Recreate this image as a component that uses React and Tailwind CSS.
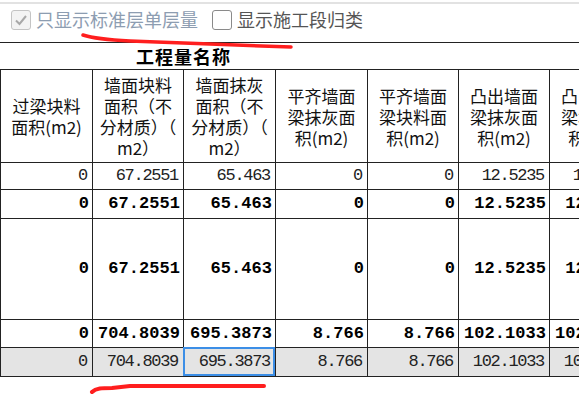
import React from "react";

const headers = [
  ["过梁块料", "面积(m2)"],
  ["墙面块料", "面积（不", "分材质）（", "m2）"],
  ["墙面抹灰", "面积（不", "分材质）（", "m2）"],
  ["平齐墙面", "梁抹灰面", "积(m2)"],
  ["平齐墙面", "梁块料面", "积(m2)"],
  ["凸出墙面", "梁抹灰面", "积(m2)"],
  ["凸出墙面", "梁块料面", "积(m2)"],
];

const v1 = ["0", "67.2551", "65.463", "0", "0", "12.5235", "12.5235"];
const v2 = ["0", "704.8039", "695.3873", "8.766", "8.766", "102.1033", "102.1033"];

const rows = [
  { vals: v1, bold: false, h: "h-[27px]", bg: "" },
  { vals: v1, bold: true, h: "h-[29px]", bg: "" },
  { vals: v1, bold: true, h: "h-[101px]", bg: "" },
  { vals: v2, bold: true, h: "h-[28px]", bg: "" },
  { vals: v2, bold: false, h: "h-[29px]", bg: "bg-[#e4e4e4]", sel: 2 },
];

const gridCols = "grid grid-cols-[92px_91px_92px_92px_91px_91px_91px]";

export default function App() {
  return (
    <div className="relative w-[579px] h-[417px] bg-white overflow-hidden font-['Noto_Sans_CJK_SC',sans-serif]">
      <div className="mt-[2px] h-[2px] bg-[#e2e2e2]" />
      <div className="pt-[4px] pl-[11px] flex items-center h-[24px] box-content">
        <div className="w-[20px] h-[20px] rounded-[3px] border border-[#c4c4c4] bg-[#f3f3f3] flex items-center justify-center">
          <svg width="14" height="14" viewBox="0 0 14 14">
            <polyline points="2,7.5 5.5,11 12,3" fill="none" stroke="#a8a8a8" strokeWidth="2" />
          </svg>
        </div>
        <span className="ml-[5px] text-[18px] leading-[20px] text-[#8d9db1] -mt-[2px]">只显示标准层单层量</span>
        <div className="ml-[14px] w-[20px] h-[20px] rounded-[3px] border border-[#8a8a8a] bg-white" />
        <span className="ml-[5px] text-[18px] leading-[20px] text-[#555555] -mt-[2px]">显示施工段归类</span>
      </div>
      <div className="mt-[10px] w-[579px] overflow-hidden">
        <div className="w-max">
          <div className="h-[28px] border-t border-b border-[#222] flex items-center w-[641px]">
            <div className="w-[367px] text-center font-bold text-[18px] tracking-[1px] leading-[20px] text-black">工程量名称</div>
          </div>
          <div className={`${gridCols} border-l border-[#222] h-[93px]`}>
            {headers.map((lines, i) => (
              <div key={i} className="border-r border-b border-[#222] flex flex-col items-center justify-center text-[17px] leading-[21px] text-[#111] whitespace-nowrap">
                {lines.map((l, j) => (
                  <div key={j} className="h-[21px]">{l}</div>
                ))}
              </div>
            ))}
          </div>
          {rows.map((r, ri) => (
            <div key={ri} className={`${gridCols} border-l border-[#222] ${r.h} ${r.bg}`}>
              {r.vals.map((v, ci) => (
                <div
                  key={ci}
                  className={`relative border-r border-b border-[#222] flex items-center justify-end font-['Liberation_Mono',monospace] text-[17px] whitespace-nowrap ${
                    r.bold ? "font-bold tracking-[0.05px] pr-[3px] text-black" : "tracking-[-1.3px] pr-[5px] text-[#222]"
                  }`}
                >
                  {v}
                  {r.sel === ci && (
                    <div className="absolute -left-px -top-px right-0 bottom-0 border-2 border-[#3c8ee6]" />
                  )}
                </div>
              ))}
            </div>
          ))}
        </div>
      </div>
      <svg className="absolute left-0 top-0 pointer-events-none" width="579" height="417" viewBox="0 0 579 417">
        <path d="M83 35 C 95 39, 110 40, 130 41 L 210 44 L 291 47" fill="none" stroke="#ff1e1e" strokeWidth="3.5" strokeLinecap="round" strokeLinejoin="round" />
        <path d="M92 392 C 96 388, 102 388, 112 388 L 130 386 L 264 386" fill="none" stroke="#ff1e1e" strokeWidth="4" strokeLinecap="round" strokeLinejoin="round" />
      </svg>
    </div>
  );
}
